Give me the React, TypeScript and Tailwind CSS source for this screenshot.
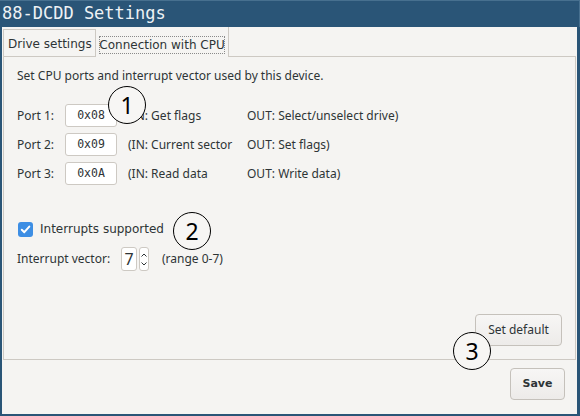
const ports = [
  { label: "Port 1:", value: "0x08", inText: "(IN: Get flags", outText: "OUT: Select/unselect drive)" },
  { label: "Port 2:", value: "0x09", inText: "(IN: Current sector", outText: "OUT: Set flags)" },
  { label: "Port 3:", value: "0x0A", inText: "(IN: Read data", outText: "OUT: Write data)" },
];

const Marker = ({ n, className }: { n: string; className: string }) => (
  <div
    className={
      "absolute w-[38px] h-[38px] rounded-full border-[1.5px] border-black bg-[#f7f6f4] flex items-center justify-center text-[23px] leading-none text-black font-['Noto_Sans',sans-serif] " +
      className
    }
  >
    <span>{n}</span>
  </div>
);

const App = () => {
  return (
    <div className="relative w-[580px] h-[416px] bg-[#2a5577] flex flex-col overflow-hidden">
      <div className="h-[27px] shrink-0 border-t border-r border-[#47708f] flex items-center pl-[2px] text-[17px] text-[#eef2f5] font-['DejaVu_Sans_Mono',monospace]">
        88-DCDD Settings
      </div>

      <div className="flex-1 ml-[2px] mr-[3px] mb-[2px] bg-[#f5f4f2] flex flex-col px-px font-['Noto_Sans',sans-serif] text-[12px] text-[#2e3436]">
        {/* tabs */}
        <div className="h-[30px] shrink-0 flex font-['DejaVu_Sans',sans-serif] text-[12px] whitespace-nowrap">
          <div className="w-[93px] mt-[2px] border border-[#cdc9c3] flex items-center pl-[4px] pt-[1px]">
            Drive settings
          </div>
          <div className="w-[133px] border-r border-[#cdc9c3] pt-[9px] pl-[3px]">
            <div className="w-[126px] h-[18px] border border-dotted border-[#8a8a8a] flex items-center justify-center">
              Connection with CPU
            </div>
          </div>
          <div className="flex-1 border-b border-[#cdc9c3]" />
        </div>

        {/* panel */}
        <div className="flex-1 border-l border-r border-b border-[#cdc9c3] flex flex-col pl-[13px] pr-[13px] pt-[11px] pb-[13px]">
          <p className="leading-[16px]">Set CPU ports and interrupt vector used by this device.</p>

          <div className="mt-[20px] flex flex-col gap-[6px]">
            {ports.map((p) => (
              <div key={p.label} className="h-[23px] flex items-center whitespace-nowrap">
                <span className="w-[48px]">{p.label}</span>
                <div className="w-[52px] h-[23px] bg-white border border-[#cdc9c3] rounded-[3px] flex items-center justify-center text-[11.5px] font-['DejaVu_Sans_Mono',monospace]">
                  {p.value}
                </div>
                <span className="ml-[11px] w-[119px]">{p.inText}</span>
                <span>{p.outText}</span>
              </div>
            ))}
          </div>

          <label className="mt-[36px] h-[16px] flex items-center font-['DejaVu_Sans',sans-serif]">
            <span className="ml-[1px] w-[15px] h-[15px] rounded-[3px] bg-[#3d8ee4] flex items-center justify-center">
              <svg width="11" height="11" viewBox="0 0 11 11" fill="none">
                <path d="M1.8 5.8 L4.3 8.2 L9.3 2.6" stroke="white" strokeWidth="2" strokeLinecap="round" strokeLinejoin="round" />
              </svg>
            </span>
            <span className="ml-[7px]">Interrupts supported</span>
          </label>

          <div className="mt-[10px] h-[24px] flex items-center">
            <span className="w-[104px]">Interrupt vector:</span>
            <div className="w-[16px] h-[24px] bg-white border border-[#cdc9c3] rounded-[3px] flex items-center justify-center text-[16px]">
              7
            </div>
            <div className="ml-[2px] w-[10px] h-[24px] bg-white border border-[#cdc9c3] rounded-[3px] flex flex-col items-center justify-center gap-[5px]">
              <svg width="6" height="4" viewBox="0 0 6 4" fill="none">
                <path d="M0.5 3.5 L3 1 L5.5 3.5" stroke="#2e3436" strokeWidth="1" />
              </svg>
              <svg width="6" height="4" viewBox="0 0 6 4" fill="none">
                <path d="M0.5 0.5 L3 3 L5.5 0.5" stroke="#2e3436" strokeWidth="1" />
              </svg>
            </div>
            <span className="ml-[13px]">(range 0-7)</span>
          </div>

          <div className="mt-auto flex justify-end">
            <button className="w-[87px] h-[32px] rounded-[4px] border border-[#c5c1bb] bg-gradient-to-b from-[#f7f6f5] to-[#edebe9] text-[12px] text-[#2e3436]">
              Set default
            </button>
          </div>
        </div>

        {/* bottom */}
        <div className="h-[54px] shrink-0 flex justify-end items-start pt-[8px] pr-[11px]">
          <button className="w-[55px] h-[32px] rounded-[4px] border border-[#c5c1bb] bg-gradient-to-b from-[#f7f6f5] to-[#edebe9] text-[11px] font-bold text-[#2e3436] font-['DejaVu_Sans',sans-serif]">
            Save
          </button>
        </div>
      </div>

      <Marker n="1" className="left-[108px] top-[86px]" />
      <Marker n="2" className="left-[173px] top-[212px]" />
      <Marker n="3" className="left-[453px] top-[332px]" />
    </div>
  );
};

export default App;
